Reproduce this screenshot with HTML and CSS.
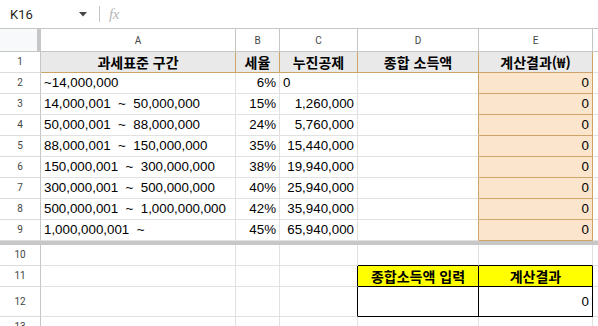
FILE: index.html
```html
<!DOCTYPE html>
<html lang="ko">
<head>
<meta charset="utf-8">
<title>종합소득세 계산</title>
<link rel="stylesheet" href="styles.css">
</head>
<body>
<div class="fbar">
  <div class="namebox">K16</div>
  <svg class="caret" width="8" height="5" viewBox="0 0 8 5"><polygon points="0,0 8,0 4,4.5" fill="#444746"/></svg>
  <div class="sep"></div>
  <div class="fx">fx</div>
</div>
<div class="sheet">
  <div class="c corner"></div><div class="c ch">A</div><div class="c ch">B</div><div class="c ch">C</div><div class="c ch">D</div><div class="c ch">E</div><div class="c ch"></div>

  <div class="c rh">1</div><div class="c h1">과세표준 구간</div><div class="c h1">세율</div><div class="c h1">누진공제</div><div class="c h1">종합 소득액</div><div class="c h1">계산결과(₩)</div><div class="c"></div>

  <div class="c rh">2</div><div class="c">~14,000,000</div><div class="c r">6%</div><div class="c">0</div><div class="c dl"></div><div class="c e r">0</div><div class="c"></div>
  <div class="c rh">3</div><div class="c">14,000,001  ~  50,000,000</div><div class="c r">15%</div><div class="c r">1,260,000</div><div class="c dl"></div><div class="c e r">0</div><div class="c"></div>
  <div class="c rh">4</div><div class="c">50,000,001  ~  88,000,000</div><div class="c r">24%</div><div class="c r">5,760,000</div><div class="c dl"></div><div class="c e r">0</div><div class="c"></div>
  <div class="c rh">5</div><div class="c">88,000,001  ~  150,000,000</div><div class="c r">35%</div><div class="c r">15,440,000</div><div class="c dl"></div><div class="c e r">0</div><div class="c"></div>
  <div class="c rh">6</div><div class="c">150,000,001  ~  300,000,000</div><div class="c r">38%</div><div class="c r">19,940,000</div><div class="c dl"></div><div class="c e r">0</div><div class="c"></div>
  <div class="c rh">7</div><div class="c">300,000,001  ~  500,000,000</div><div class="c r">40%</div><div class="c r">25,940,000</div><div class="c dl"></div><div class="c e r">0</div><div class="c"></div>
  <div class="c rh">8</div><div class="c">500,000,001  ~  1,000,000,000</div><div class="c r">42%</div><div class="c r">35,940,000</div><div class="c dl"></div><div class="c e r">0</div><div class="c"></div>
  <div class="c rh">9</div><div class="c">1,000,000,001  ~</div><div class="c r">45%</div><div class="c r">65,940,000</div><div class="c dl"></div><div class="c e r">0</div><div class="c"></div>

  <div class="freeze"></div>

  <div class="c rh">10</div><div class="c"></div><div class="c"></div><div class="c"></div><div class="c bb"></div><div class="c bb"></div><div class="c"></div>
  <div class="c rh">11</div><div class="c"></div><div class="c"></div><div class="c br"></div><div class="c box yel">종합소득액 입력</div><div class="c box yel">계산결과</div><div class="c"></div>
  <div class="c rh">12</div><div class="c"></div><div class="c"></div><div class="c br"></div><div class="c box"></div><div class="c box r">0</div><div class="c"></div>
  <div class="c rh">13</div><div class="c"></div><div class="c"></div><div class="c"></div><div class="c"></div><div class="c"></div><div class="c"></div>
</div>
</body>
</html>
```
FILE: styles.css
```css
html, body {
  margin: 0;
  padding: 0;
  background: #ffffff;
  overflow: hidden;
}
body {
  width: 598px;
  height: 326px;
  font-family: "Liberation Sans", Arial, "Noto Sans CJK KR", sans-serif;
  color: #000000;
}

/* formula bar */
.fbar {
  display: flex;
  align-items: center;
  height: 28px;
  border-bottom: 1px solid #c4c7c5;
  box-sizing: content-box;
}
.namebox {
  width: 79px;
  padding-left: 10px;
  box-sizing: border-box;
  font-family: Roboto, "Liberation Sans", sans-serif;
  font-size: 13px;
  color: #1f1f1f;
}
.caret {
  display: block;
}
.sep {
  width: 1px;
  height: 16px;
  background: #c4c7c5;
  margin-left: 12px;
}
.fx {
  margin-left: 9px;
  font-family: "Liberation Serif", "DejaVu Serif", serif;
  font-style: italic;
  font-size: 15px;
  color: #b5b5b5;
  letter-spacing: -0.5px;
}

/* grid */
.sheet {
  display: grid;
  grid-template-columns: 41px 195px 44px 78px 121px 114px 1fr;
  grid-template-rows: 23px repeat(9, 21px) 4px 21px 21px 30px 21px;
}
.c {
  box-sizing: border-box;
  border-right: 1px solid #e1e1e1;
  border-bottom: 1px solid #e1e1e1;
  padding: 0 3px;
  display: flex;
  align-items: center;
  overflow: hidden;
  white-space: pre;
  font-size: 13.33px;
  line-height: 16px;
}
.r {
  justify-content: flex-end;
}
.corner {
  background: #f8f9fa;
  border-right: 4px solid #c7c7c7;
  border-bottom: 1px solid #c4c7c5;
}
.ch {
  justify-content: center;
  font-family: Roboto, "Liberation Sans", sans-serif;
  font-size: 10px;
  color: #444746;
  border-right-color: #c4c7c5;
  border-bottom-color: #c4c7c5;
  padding-top: 1px;
}
.rh {
  justify-content: center;
  font-family: Roboto, "Liberation Sans", sans-serif;
  font-size: 10px;
  color: #444746;
  border-right-color: #c4c7c5;
  border-bottom-color: #dcdcdc;
}
.h1 {
  background: #e9e9e9;
  justify-content: center;
  font-family: "Noto Sans CJK KR", sans-serif;
  font-weight: 700;
  font-size: 14px;
  border-right-color: #cda56a;
  border-bottom-color: #cda56a;
}
.dl {
  border-right-color: #cda56a;
}
.e {
  background: #fce5cd;
  border-right-color: #cda56a;
  border-bottom-color: #cda56a;
}
.freeze {
  grid-column: 1 / -1;
  background: #c7c7c7;
}
.bb {
  border-bottom-color: #000000;
}
.br {
  border-right-color: #000000;
}
.box {
  border-right-color: #000000;
  border-bottom-color: #000000;
}
.yel {
  background: #ffff00;
  justify-content: center;
  font-family: "Noto Sans CJK KR", sans-serif;
  font-weight: 700;
  font-size: 14px;
}
```
